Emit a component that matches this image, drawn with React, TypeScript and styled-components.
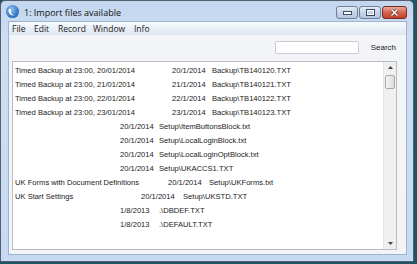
import React from "react";
import styled, { createGlobalStyle } from "styled-components";

const Global = createGlobalStyle`
  html, body { margin: 0; padding: 0; background: #1d5565; }
  body { width: 417px; height: 264px; overflow: hidden; }
`;

const Window = styled.div`
  box-sizing: border-box;
  width: 414px;
  height: 262px;
  background: linear-gradient(#c3d6ee, #cfdff3 40px, #c6daf2);
  border: 1px solid #55606c;
  border-radius: 5px 5px 0 0;
  display: flex;
  flex-direction: column;
  font-family: "Liberation Sans", Arial, sans-serif;
  color: #1b1b1b;
`;

const TitleBar = styled.div`
  height: 20px;
  display: flex;
  align-items: center;
  padding: 0 6px 0 4px;
  gap: 4px;
`;

const TitleText = styled.div`
  flex: 1;
  font-family: "Open Sans", "Liberation Sans", sans-serif;
  font-size: 9px;
  color: #111;
  padding-top: 2px;
`;

const Controls = styled.div`
  display: flex;
  gap: 1px;
  align-self: flex-start;
  margin-top: 5px;
`;

const CtlButton = styled.div<{ $close?: boolean }>`
  box-sizing: border-box;
  width: ${(p) => (p.$close ? "25px" : "22px")};
  height: 13px;
  border: 1px solid ${(p) => (p.$close ? "#7b2a22" : "#6d7f98")};
  border-radius: 3px;
  background: ${(p) =>
    p.$close
      ? "linear-gradient(#e9a99c, #d4634f 50%, #c4412c)"
      : "linear-gradient(#e4ecf6, #c5d4e7 50%, #b4c6de)"};
  display: flex;
  align-items: center;
  justify-content: center;
`;

const Client = styled.div`
  flex: 1;
  margin: 0 6px 6px 7px;
  display: flex;
  flex-direction: column;
  background: #f2f4f7;
  border: 1px solid #9fb2cb;
`;

const MenuBar = styled.div`
  height: 13px;
  display: flex;
  align-items: center;
  gap: 0;
  padding-left: 3px;
  background: linear-gradient(#f7f9fc, #dde6f2);
  font-family: "Open Sans", "Liberation Sans", sans-serif;
  font-size: 8.5px;
`;

const MenuItem = styled.span<{ $w: number }>`
  width: ${(p) => p.$w}px;
`;

const Toolbar = styled.div`
  height: 25px;
  display: flex;
  align-items: center;
  justify-content: flex-end;
  padding-right: 10px;
  gap: 12px;
`;

const SearchBox = styled.div`
  box-sizing: border-box;
  width: 84px;
  height: 13px;
  background: #fff;
  border: 1px solid #c9cdd3;
  border-radius: 2px;
`;

const SearchLabel = styled.span`
  font-size: 8px;
`;

const ListBox = styled.div`
  box-sizing: border-box;
  margin: 1px 9px 4px 3px;
  flex: 1;
  background: #fff;
  border: 1px solid #b9bdc3;
  display: flex;
`;

const Rows = styled.div`
  flex: 1;
  padding-top: 1px;
  display: flex;
  flex-direction: column;
`;

const Row = styled.div<{ $cols: string }>`
  height: 14px;
  display: grid;
  grid-template-columns: ${(p) => p.$cols};
  align-items: center;
  padding-left: 2px;
  font-size: 7.6px;
  white-space: nowrap;
`;

const Cell = styled.span``;

const ScrollBar = styled.div`
  width: 12px;
  background: #f0f0f0;
  border-left: 1px solid #e4e4e4;
  display: flex;
  flex-direction: column;
  align-items: center;
`;

const Arrow = styled.div`
  height: 11px;
  display: flex;
  align-items: center;
  justify-content: center;
`;

const Thumb = styled.div`
  box-sizing: border-box;
  width: 10px;
  height: 14px;
  margin-top: 2px;
  border: 1px solid #a9a9a9;
  border-radius: 2px;
  background: linear-gradient(90deg, #f4f4f4, #dcdcdc);
`;

const Track = styled.div`
  flex: 1;
`;

type R = { d?: string; date: string; path: string; x1: number; x2: number };

const rows: R[] = [
  { d: "Timed Backup at 23:00, 20/01/2014", date: "20/1/2014", path: "Backup\\TB140120.TXT", x1: 170, x2: 210 },
  { d: "Timed Backup at 23:00, 21/01/2014", date: "21/1/2014", path: "Backup\\TB140121.TXT", x1: 170, x2: 210 },
  { d: "Timed Backup at 23:00, 22/01/2014", date: "22/1/2014", path: "Backup\\TB140122.TXT", x1: 170, x2: 210 },
  { d: "Timed Backup at 23:00, 23/01/2014", date: "23/1/2014", path: "Backup\\TB140123.TXT", x1: 170, x2: 210 },
  { date: "20/1/2014", path: "Setup\\ItemButtonsBlock.txt", x1: 118, x2: 157 },
  { date: "20/1/2014", path: "Setup\\LocalLoginBlock.txt", x1: 118, x2: 157 },
  { date: "20/1/2014", path: "Setup\\LocalLoginOptBlock.txt", x1: 118, x2: 157 },
  { date: "20/1/2014", path: "Setup\\UKACCS1.TXT", x1: 118, x2: 157 },
  { d: "UK Forms with Document Definitions", date: "20/1/2014", path: "Setup\\UKForms.txt", x1: 166, x2: 207 },
  { d: "UK Start Settings", date: "20/1/2014", path: "Setup\\UKSTD.TXT", x1: 139, x2: 181 },
  { date: "1/8/2013", path: ".\\DBDEF.TXT", x1: 118, x2: 157 },
  { date: "1/8/2013", path: ".\\DEFAULT.TXT", x1: 118, x2: 157 },
];

const LEFT = 13;

export default function App() {
  return (
    <>
      <Global />
      <Window>
        <TitleBar>
          <svg width="15" height="15" viewBox="0 0 16 16">
            <defs>
              <radialGradient id="lg" cx="0.4" cy="0.35" r="0.7">
                <stop offset="0" stopColor="#8fc2ef" />
                <stop offset="1" stopColor="#1f64b4" />
              </radialGradient>
            </defs>
            <circle cx="8" cy="8" r="7" fill="url(#lg)" />
            <path d="M4 5 C3 9 6 13 11 12 C8 12 5.5 9.5 6.5 5.5 Z" fill="#fff" />
          </svg>
          <TitleText>1: Import files available</TitleText>
          <Controls>
            <CtlButton>
              <svg width="9" height="5" viewBox="0 0 9 5">
                <rect x="0.5" y="1.5" width="8" height="3" fill="#fff" stroke="#3a4b63" />
              </svg>
            </CtlButton>
            <CtlButton>
              <svg width="9" height="7" viewBox="0 0 9 7">
                <rect x="0.5" y="0.5" width="8" height="6" fill="none" stroke="#3a4b63" />
                <rect x="1.5" y="1.5" width="6" height="4" fill="none" stroke="#fff" />
              </svg>
            </CtlButton>
            <CtlButton $close>
              <svg width="9" height="7" viewBox="0 0 9 7">
                <path d="M1.5 0.5 L7.5 6.5 M7.5 0.5 L1.5 6.5" stroke="#5a1a12" strokeWidth="2.6" />
                <path d="M1.5 0.5 L7.5 6.5 M7.5 0.5 L1.5 6.5" stroke="#fff" strokeWidth="1.5" />
              </svg>
            </CtlButton>
          </Controls>
        </TitleBar>
        <Client>
          <MenuBar>
            <MenuItem $w={22}>File</MenuItem>
            <MenuItem $w={24}>Edit</MenuItem>
            <MenuItem $w={35}>Record</MenuItem>
            <MenuItem $w={41}>Window</MenuItem>
            <MenuItem $w={20}>Info</MenuItem>
          </MenuBar>
          <Toolbar>
            <SearchBox />
            <SearchLabel>Search</SearchLabel>
          </Toolbar>
          <ListBox>
            <Rows>
              {rows.map((r, i) => (
                <Row key={i} $cols={`${r.x1 - LEFT}px ${r.x2 - r.x1}px auto`}>
                  <Cell>{r.d ?? ""}</Cell>
                  <Cell>{r.date}</Cell>
                  <Cell>{r.path}</Cell>
                </Row>
              ))}
            </Rows>
            <ScrollBar>
              <Arrow>
                <svg width="5" height="3" viewBox="0 0 5 3">
                  <path d="M0 3 L2.5 0 L5 3 Z" fill="#444" />
                </svg>
              </Arrow>
              <Thumb />
              <Track />
              <Arrow>
                <svg width="5" height="3" viewBox="0 0 5 3">
                  <path d="M0 0 L2.5 3 L5 0 Z" fill="#444" />
                </svg>
              </Arrow>
            </ScrollBar>
          </ListBox>
        </Client>
      </Window>
    </>
  );
}
